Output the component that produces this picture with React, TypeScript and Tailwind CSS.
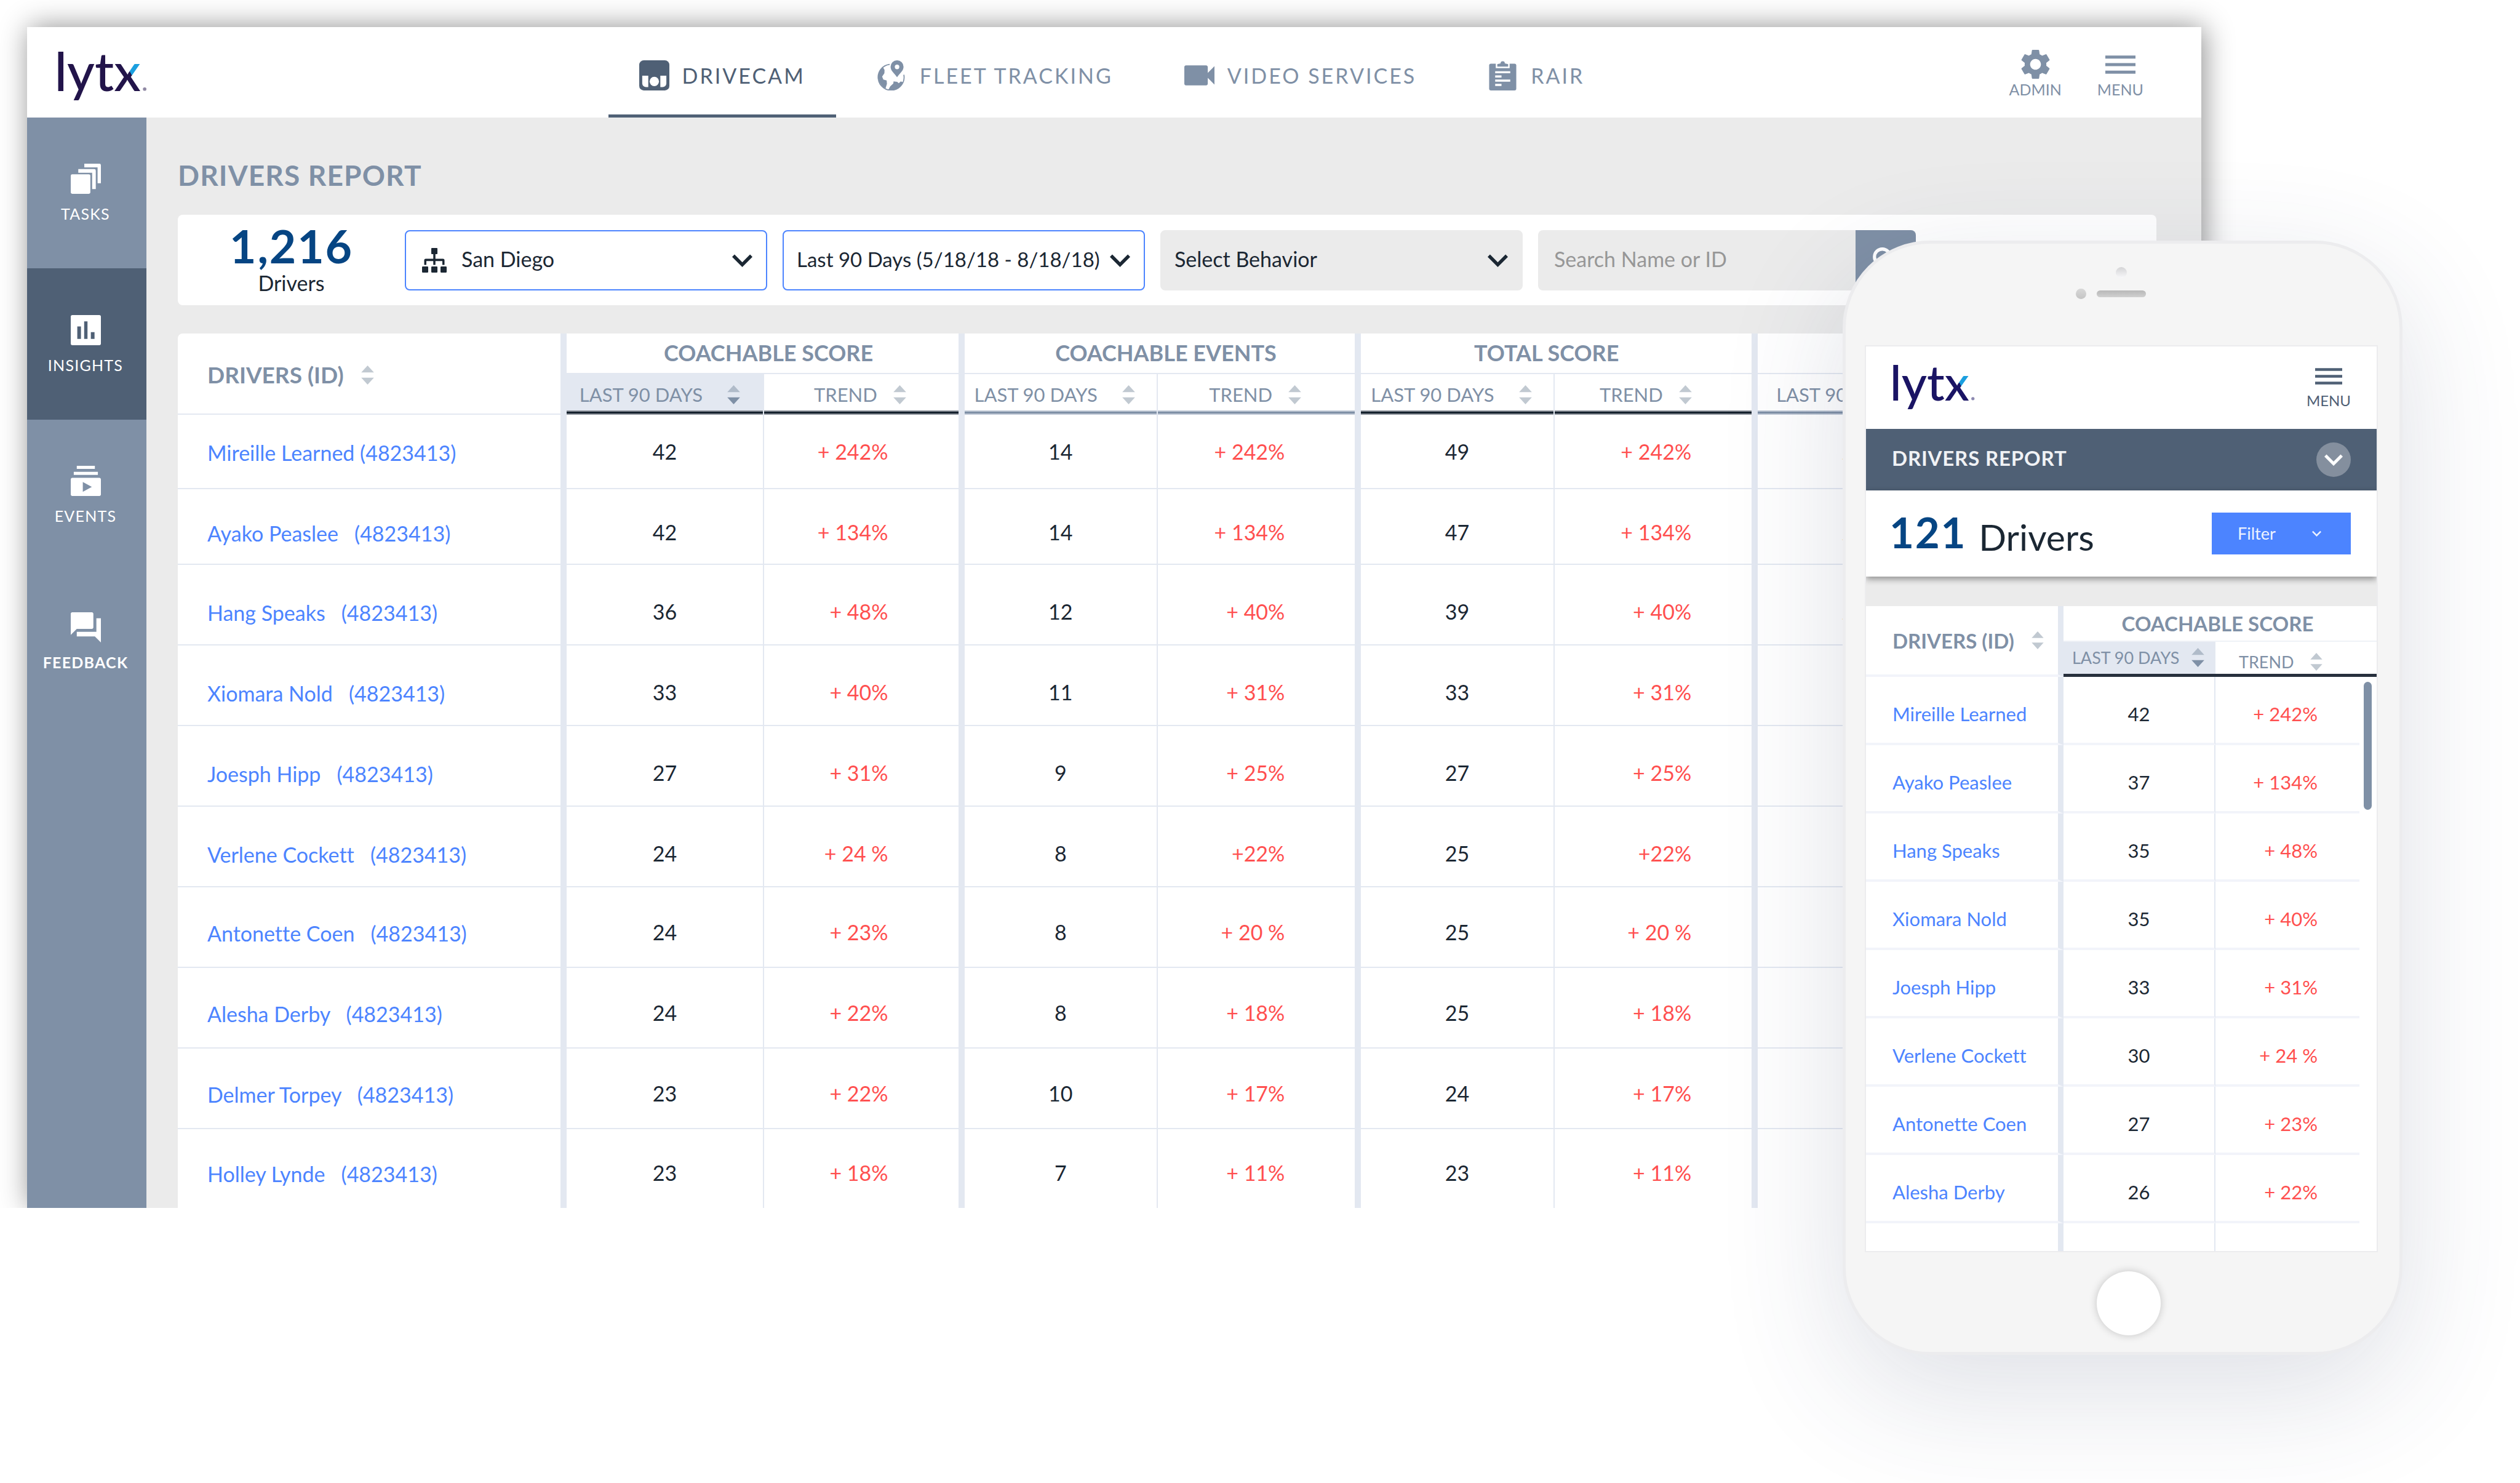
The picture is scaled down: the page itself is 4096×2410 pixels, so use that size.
import React from "react";
import { MdSettings, MdVideocam } from "react-icons/md";

type SvgProps = { className?: string };

/* ---------- Icons ---------- */

function Logo({ id, className, ink }: { id: string; className: string; ink: string }) {
  return (
    <svg viewBox="0 0 182 108" className={"overflow-visible " + className} role="img" aria-label="lytx">
      <defs>
        <linearGradient id={id} gradientUnits="userSpaceOnUse" x1="0" y1="0" x2="100" y2="-60">
          <stop offset="0.875" stopColor={ink} />
          <stop offset="0.875" stopColor="#1b9fdf" />
        </linearGradient>
      </defs>
      <text x="-6" y="81" fontFamily="Lato, sans-serif" fontSize="106" fontWeight="500" fill={`url(#${id})`}>
        lytx
      </text>
      <circle cx="174" cy="77" r="3.5" fill={ink} opacity="0.5" />
    </svg>
  );
}

function Chevron({ className }: SvgProps) {
  return (
    <svg viewBox="6 8 12 8" className={className} fill="currentColor" aria-hidden="true">
      <path d="M16.59 8.59L12 13.17 7.41 8.59 6 10l6 6 6-6z" />
    </svg>
  );
}

function OrgIcon({ className }: SvgProps) {
  return (
    <svg viewBox="0 0 16 16" className={className} fill="currentColor" aria-hidden="true">
      <rect x="6" y="0" width="4" height="4" rx="0.4" />
      <path d="M7.3 4h1.4v3H13.6a1 1 0 0 1 1 1v3h-1.4V8.5H8.7V11H7.3V8.5H2.8V11H1.4V8a1 1 0 0 1 1-1H7.3z" />
      <rect x="0" y="12" width="4" height="4" rx="0.5" />
      <rect x="6" y="12" width="4" height="4" rx="0.5" />
      <rect x="12" y="12" width="4" height="4" rx="0.5" />
    </svg>
  );
}

function SortIcon({ className, active }: { className: string; active?: boolean }) {
  return (
    <svg viewBox="0 0 20 30" className={className} aria-hidden="true">
      <path d="M10 0L20 11H0z" fill={active ? "#b0bbc9" : "#c1c9d1"} />
      <path d="M10 30L0 19H20z" fill={active ? "#7f90a6" : "#c1c9d1"} />
    </svg>
  );
}

function DrivecamIcon({ className }: SvgProps) {
  return (
    <svg viewBox="0 0 20 20" className={className} aria-hidden="true">
      <rect width="20" height="20" rx="3" fill="currentColor" />
      <path d="M2 10.2h4v7.6H4.5A2.5 2.5 0 0 1 2 15.3z" fill="#fff" />
      <path d="M18 10.2h-4v7.6h1.5a2.5 2.5 0 0 0 2.5-2.5z" fill="#fff" />
      <circle cx="10" cy="14" r="3.1" fill="#fff" />
    </svg>
  );
}

function GlobePinIcon({ className }: SvgProps) {
  return (
    <svg viewBox="0 0 20 20" className={className} fill="currentColor" aria-hidden="true">
      <path d="M8.6 2.7A8.6 8.6 0 1 0 18 9.6" fill="none" stroke="currentColor" strokeWidth="0.7" />
      <path d="M4 4.3L5.2 6.4 5.1 8.6 3.6 10.8 4.4 12.8 6.6 13.4 6.8 15.6 5.8 18.8A9 9 0 0 1 4 4.3z" />
      <path d="M7.6 19.8L9 17.2 11 15.4 11.2 14 13.6 14.3 14.6 15.2 16 14 17.4 14.6A9 9 0 0 1 7.6 19.8z" />
      <path
        fillRule="evenodd"
        d="M13.5 0a4.3 4.3 0 0 1 4.3 4.3c0 2.6-2.3 4.2-4.3 6.9-2-2.7-4.3-4.3-4.3-6.9A4.3 4.3 0 0 1 13.5 0zm0 2.9a1.5 1.5 0 1 0 0 3 1.5 1.5 0 0 0 0-3z"
      />
    </svg>
  );
}

function ClipboardIcon({ className }: SvgProps) {
  return (
    <svg viewBox="0 0 20 20" className={className} aria-hidden="true">
      <rect x="1" y="2.2" width="18" height="17.8" rx="1.2" fill="currentColor" />
      <path d="M5.4 2h9.2v3.2H5.4z" fill="#fff" />
      <path d="M6.4 4.2V2.6L8.6 2a1.4 1.4 0 0 1 2.8 0l2.2.6v1.6z" fill="currentColor" />
      <path d="M5 7.2h10v1.4H5zM5 10h4.2v1.4H5zM5 12.8h10v1.4H5zM5 15.6h4.2V17H5z" fill="#fff" />
    </svg>
  );
}

function VideoIcon({ className }: SvgProps) {
  return <MdVideocam viewBox="3 3 18 18" className={className} aria-hidden="true" />;
}

function GearIcon({ className }: SvgProps) {
  return <MdSettings viewBox="2 2 20 20" className={className} aria-hidden="true" />;
}

function BarsIcon({ className }: SvgProps) {
  return (
    <svg viewBox="0 0 20 12" className={className} fill="currentColor" aria-hidden="true">
      <path d="M0 0h20v2H0zM0 5h20v2H0zM0 10h20v2H0z" />
    </svg>
  );
}

function TasksIcon({ className }: SvgProps) {
  return (
    <svg viewBox="0 0 20 20" className={className} fill="currentColor" aria-hidden="true">
      <rect x="0" y="7" width="13" height="13" rx="1" />
      <path d="M5 3.6h10.6a1 1 0 0 1 1 1v12.2h-2.4V6H5z" />
      <path d="M9 0h10a1 1 0 0 1 1 1v12h-2.2V2.4H9z" />
    </svg>
  );
}

function InsightsIcon({ className }: SvgProps) {
  return (
    <svg viewBox="3 3 18 18" className={className} fill="currentColor" aria-hidden="true">
      <path
        fillRule="evenodd"
        d="M4 3h16a1 1 0 0 1 1 1v16a1 1 0 0 1-1 1H4a1 1 0 0 1-1-1V4a1 1 0 0 1 1-1zM6.9 9.8v7.4h2.2V9.8zM11 6.8v10.4h2V6.8zM15 13.2v4h2.2v-4z"
      />
    </svg>
  );
}

function EventsIcon({ className }: SvgProps) {
  return (
    <svg viewBox="2 2 20 20" className={className} fill="currentColor" aria-hidden="true">
      <path d="M20 8H4V6h16v2zm-2-6H6v2h12V2zm4 9v10c0 .55-.45 1-1 1H3c-.55 0-1-.45-1-1V11c0-.55.45-1 1-1h18c.55 0 1 .45 1 1zm-6 5l-6-3.27v6.53L16 16z" />
    </svg>
  );
}

function FeedbackIcon({ className }: SvgProps) {
  return (
    <svg viewBox="2 2 20 20" className={className} fill="currentColor" aria-hidden="true">
      <path d="M21.5 6H19v9H6v3h12l4 4V6zm-4.5 6V3c0-.55-.45-1-1-1H3c-.55 0-1 .45-1 1v14l4-4h10c.55 0 1-.45 1-1z" />
    </svg>
  );
}

/* ---------- Data ---------- */

const tabs = [
  { label: "DRIVECAM", Icon: DrivecamIcon, active: true },
  { label: "FLEET TRACKING", Icon: GlobePinIcon },
  { label: "VIDEO SERVICES", Icon: VideoIcon },
  { label: "RAIR", Icon: ClipboardIcon },
];

const sideItems = [
  { label: "TASKS", Icon: TasksIcon, style: "h-[245px]" },
  { label: "INSIGHTS", Icon: InsightsIcon, style: "h-[246px] bg-[#4f6075]" },
  { label: "EVENTS", Icon: EventsIcon, style: "h-[245px]" },
  { label: "FEEDBACK", Icon: FeedbackIcon, style: "h-[231px] font-bold" },
];

const lineDark =
  "shadow-[inset_0_-2px_0_#8b9099,inset_0_-5px_0_#16222e,inset_0_-7px_0_#8b9099]";
const lineBlue =
  "shadow-[inset_0_-2px_0_#bfc8d5,inset_0_-5px_0_#7f90a6,inset_0_-7px_0_#bfc8d5]";

const groups = [
  { title: "COACHABLE SCORE", titlePad: "pl-5", line: lineDark, lastPad: "pl-[21px]", headPad: "pr-1", trendPad: "pr-[114px]" },
  { title: "COACHABLE EVENTS", titlePad: "pl-5", line: lineBlue, lastPad: "pl-[16px]", headPad: "pr-1", trendPad: "pr-[114px]" },
  { title: "TOTAL SCORE", titlePad: "pr-8", line: lineDark, lastPad: "pl-[16px]", headPad: "pr-6", trendPad: "pr-[98px]" },
  { title: "TOTAL EVENTS", titlePad: "", line: lineBlue, lastPad: "pl-[30px]", headPad: "", trendPad: "pr-[98px]" },
];

const rows = [
  { name: "Mireille Learned (4823413)", cells: ["42", "+ 242%", "14", "+ 242%", "49", "+ 242%", "22", "+ 242%"] },
  { name: "Ayako Peaslee   (4823413)", cells: ["42", "+ 134%", "14", "+ 134%", "47", "+ 134%", "22", "+ 134%"] },
  { name: "Hang Speaks   (4823413)", cells: ["36", "+ 48%", "12", "+ 40%", "39", "+ 40%", "22", "+ 40%"] },
  { name: "Xiomara Nold   (4823413)", cells: ["33", "+ 40%", "11", "+ 31%", "33", "+ 31%", "9", "+ 31%"] },
  { name: "Joesph Hipp   (4823413)", cells: ["27", "+ 31%", "9", "+ 25%", "27", "+ 25%", "9", "+ 25%"] },
  { name: "Verlene Cockett   (4823413)", cells: ["24", "+ 24 %", "8", "+22%", "25", "+22%", "8", "+22%"] },
  { name: "Antonette Coen   (4823413)", cells: ["24", "+ 23%", "8", "+ 20 %", "25", "+ 20 %", "8", "+ 20 %"] },
  { name: "Alesha Derby   (4823413)", cells: ["24", "+ 22%", "8", "+ 18%", "25", "+ 18%", "8", "+ 18%"] },
  { name: "Delmer Torpey   (4823413)", cells: ["23", "+ 22%", "10", "+ 17%", "24", "+ 17%", "8", "+ 17%"] },
  { name: "Holley Lynde   (4823413)", cells: ["23", "+ 18%", "7", "+ 11%", "23", "+ 11%", "7", "+ 11%"] },
];

const phoneRows = [
  ["Mireille Learned", "42", "+ 242%"],
  ["Ayako Peaslee", "37", "+ 134%"],
  ["Hang Speaks", "35", "+ 48%"],
  ["Xiomara Nold", "35", "+ 40%"],
  ["Joesph Hipp", "33", "+ 31%"],
  ["Verlene Cockett", "30", "+ 24 %"],
  ["Antonette Coen", "27", "+ 23%"],
  ["Alesha Derby", "26", "+ 22%"],
];

function rowStyle(i: number) {
  if (i === 0) return { h: "h-[121px]", pt: "pt-[36px]" };
  if (i === 1) return { h: "h-[123px]", pt: "pt-[46px]" };
  if (i < 6) return { h: "h-[131px]", pt: "pt-[52px]" };
  if (i < 9) return { h: "h-[131px]", pt: "pt-[49px]" };
  return { h: "h-[128px]", pt: "pt-[47px]" };
}

/* ---------- Desktop app ---------- */

function Header() {
  return (
    <header className="grid h-[147px] grid-cols-[1fr_auto_1fr] bg-white">
      <div className="flex items-center pt-4 pl-[49px]">
        <Logo id="logo-desk" ink="#22144a" className="h-[88px] w-[149px]" />
      </div>
      <nav className="flex gap-4 pr-2">
        {tabs.map(({ label, Icon, active }) => (
          <a
            key={label}
            href="#"
            className={
              "flex items-center gap-[21px] border-b-[5px] px-[50px] pt-[14px] text-[34px] tracking-[3px] whitespace-nowrap " +
              (active ? "border-[#4f6075] text-[#4f6075]" : "border-transparent text-[#7f90a6]")
            }
          >
            <Icon className="size-[49px]" />
            {label}
          </a>
        ))}
      </nav>
      <div className="flex items-center justify-end gap-[58px] pt-0.5 pr-[94px] text-[25px] leading-6 text-[#7f90a6]">
        <button className="flex flex-col items-center gap-1">
          <GearIcon className="size-[49px]" />
          ADMIN
        </button>
        <button className="flex flex-col items-center gap-1">
          <span className="flex h-[49px] items-center">
            <BarsIcon className="h-[30px] w-[49px]" />
          </span>
          MENU
        </button>
      </div>
    </header>
  );
}

function Sidebar() {
  return (
    <aside className="w-[194px] shrink-0 bg-[#7f90a6] text-[25px] leading-7 tracking-wider text-white">
      {sideItems.map(({ label, Icon, style }) => (
        <a key={label} href="#" className={"flex flex-col items-center justify-center gap-[18px] pr-1 " + style}>
          <Icon className="size-[49px]" />
          {label}
        </a>
      ))}
    </aside>
  );
}

function Picker({ label, option, outlined, icon, size = "text-[34px]" }: { label: string; option: string; outlined?: boolean; icon?: boolean; size?: string }) {
  return (
    <div
      className={
        "flex h-[98px] w-[589px] items-center rounded-lg pr-[22px] text-[#1b2733] " +
        (outlined ? "border-2 border-[#4c84ff] bg-white " : "border-2 border-[#ebebeb] bg-[#ebebeb] ") +
        (icon ? "pl-[26px]" : "pl-[21px]")
      }
    >
      {icon && <OrgIcon className="mr-[24px] size-[40px] shrink-0" />}
      <select aria-label={label} className={"min-w-0 flex-1 appearance-none bg-transparent pb-1 leading-[48px] " + size}>
        <option>{option}</option>
      </select>
      <Chevron className="h-[22px] w-[33px] shrink-0" />
    </div>
  );
}

function FilterBar() {
  return (
    <section className="mt-[34px] flex h-[147px] items-center rounded-lg bg-white">
      <div className="w-[369px] shrink-0 text-center">
        <p className="text-[75px] leading-[74px] font-bold tracking-wide text-[#064583]">1,216</p>
        <p className="text-[34px] leading-[48px] text-[#1b2733]">Drivers</p>
      </div>
      <div className="flex gap-[25px]">
        <Picker label="Group" option="San Diego" outlined icon />
        <Picker label="Date range" option="Last 90 Days (5/18/18 - 8/18/18)" outlined size="text-[33px]" />
        <Picker label="Behavior" option="Select Behavior" />
        <form className="flex h-[98px] w-[614px] overflow-hidden rounded-lg">
          <input
            aria-label="Search Name or ID"
            placeholder="Search Name or ID"
            className="min-w-0 flex-1 bg-[#ebebeb] pb-1 pl-[26px] text-[34px] placeholder:text-[#979797]"
          />
          <button type="button" aria-label="Search" className="flex w-[98px] items-center justify-center bg-[#7f90a6] text-white">
            <svg viewBox="0 0 20 20" className="size-[44px]" fill="none" stroke="currentColor" strokeWidth="2.4" aria-hidden="true">
              <circle cx="7.5" cy="7.5" r="5.8" />
              <path d="M12 12l6.5 6.5" />
            </svg>
          </button>
        </form>
      </div>
    </section>
  );
}

function DriversTable() {
  return (
    <div className="mt-[46px] overflow-hidden rounded-tl-lg bg-white">
      <table className="w-full table-fixed border-separate border-spacing-0 text-[34px] leading-[48px] whitespace-nowrap text-[#1b2733]">
        <colgroup>
          <col className="w-[631px]" />
          <col className="w-[321px]" />
          <col className="w-[325px]" />
          <col className="w-[314px]" />
          <col className="w-[330px]" />
          <col className="w-[314px]" />
          <col className="w-[330px]" />
          <col className="w-[314px]" />
          <col className="w-[333px]" />
        </colgroup>
        <thead className="text-[#7f90a6]">
          <tr className="h-[66px]">
            <th rowSpan={2} className="border-r-[10px] border-b-2 border-[#e3e8f1] p-0 pt-1 pl-[48px]">
              <button className="flex items-center gap-[28px] text-[37px] font-bold">
                DRIVERS (ID)
                <SortIcon className="h-[31px] w-[21px]" />
              </button>
            </th>
            {groups.map((g) => (
              <th
                key={g.title}
                colSpan={2}
                className={"border-r-[10px] border-b-2 border-[#e3e8f1] p-0 pb-0.5 text-[36px] font-bold " + g.titlePad}
              >
                {g.title}
              </th>
            ))}
          </tr>
          <tr className="h-[66px] text-[31px]">
            {groups.map((g, i) => (
              <React.Fragment key={g.title}>
                <th className={"border-r-2 border-[#e3e8f1] p-0 font-normal " + (i === 0 ? "bg-[#e3e8f1] " : "") + g.line}>
                  <button className={"flex items-center gap-[40px] " + g.lastPad}>
                    LAST 90 DAYS
                    <SortIcon active={i === 0} className="h-[31px] w-[21px]" />
                  </button>
                </th>
                <th className={"border-r-[10px] border-[#e3e8f1] p-0 font-normal " + g.headPad + " " + g.line}>
                  <button className="mx-auto flex items-center gap-[26px]">
                    TREND
                    <SortIcon className="h-[31px] w-[21px]" />
                  </button>
                </th>
              </React.Fragment>
            ))}
          </tr>
        </thead>
        <tbody>
          {rows.map((r, i) => {
            const { h, pt } = rowStyle(i);
            const line = i === rows.length - 1 ? "" : "border-b-2 ";
            return (
              <tr key={r.name} className={h}>
                <td className={"border-r-[10px] border-[#e3e8f1] pb-0 pl-[48px] align-top " + line + pt}>
                  <a href="#" className="block pt-0.5 whitespace-pre text-[#4c84ff]">{r.name}</a>
                </td>
                {r.cells.map((c, j) =>
                  j % 2 === 0 ? (
                    <td key={j} className={"border-r-2 border-[#e3e8f1] px-0 pb-0 text-center align-top " + line + pt}>
                      {c}
                    </td>
                  ) : (
                    <td
                      key={j}
                      className={
                        "border-r-[10px] border-[#e3e8f1] pb-0 pl-0 text-right align-top text-[#ff4f4f] " +
                        line + pt + " " + groups[(j - 1) / 2].trendPad
                      }
                    >
                      {c}
                    </td>
                  )
                )}
              </tr>
            );
          })}
        </tbody>
      </table>
    </div>
  );
}

/* ---------- Phone ---------- */

function Phone() {
  return (
    <section
      aria-label="Mobile view"
      className="absolute top-[391px] right-[191px] w-[910px] rounded-[142px] border-[5px] border-[#ececee] bg-[#f5f5f5] pr-[35px] pl-[31px] shadow-[0_60px_200px_rgba(50,60,100,0.16)]"
    >
      <div className="flex h-[165px] flex-col items-center pt-[38px]">
        <div className="size-[18px] rounded-full bg-gradient-to-b from-[#d4d4d6] to-[#f8f8fa]" />
        <div className="mt-[17px] grid w-full grid-cols-[1fr_80px_1fr] items-center">
          <div className="mr-[17px] size-[17px] justify-self-end rounded-full bg-gradient-to-b from-[#d8d8d8] to-[#c4c4c4]" />
          <div className="h-[11px] rounded-full bg-gradient-to-b from-[#b8b8b8] to-[#d0d0d0]" />
        </div>
      </div>

      <div className="h-[1474px] overflow-hidden border-2 border-[#ececee] bg-white">
        <header className="flex h-[134px] items-center justify-between pr-[42px] pl-[43px]">
          <Logo id="logo-phone" ink="#1a1464" className="h-[81px] w-[137px]" />
          <button className="flex flex-col items-center gap-[14px] text-[24px] leading-6 text-[#4f6075]">
            <BarsIcon className="h-[27px] w-[44px]" />
            MENU
          </button>
        </header>

        <div className="flex h-[100px] items-center justify-between bg-[#4f6075] pr-[42px] pl-[42px]">
          <h2 className="pb-1 text-[33px] font-bold tracking-wide text-[#f0f2f5]">DRIVERS REPORT</h2>
          <button aria-label="Expand report" className="flex size-[56px] items-center justify-center rounded-full bg-[#848f9e] text-white">
            <Chevron className="h-[20px] w-[30px]" />
          </button>
        </div>

        <div className="relative flex h-[140px] items-center bg-white pr-[42px] pl-[38px] shadow-[0_4px_10px_rgba(0,0,0,0.4)]">
          <p className="flex items-center gap-[20px] pb-1 leading-[68px]">
            <span className="text-[69px] font-bold tracking-wide text-[#064583]">121</span>
            <span className="pt-4 text-[59px] text-[#1b2733]">Drivers</span>
          </p>
          <button className="ml-auto flex h-[68px] w-[226px] items-center justify-between bg-[#4c84ff] pr-[48px] pl-[42px] text-[27px] text-[#edf2ff]">
            Filter
            <Chevron className="h-[10px] w-[15px]" />
          </button>
        </div>

        <div className="h-[48px] bg-[#ebebeb]" />

        <table className="w-full table-fixed border-separate border-spacing-0 text-[31px] leading-[44px] whitespace-nowrap text-[#1b2733]">
          <colgroup>
            <col className="w-[321px]" />
            <col className="w-[247px]" />
            <col className="w-[234px]" />
            <col className="w-[28px]" />
          </colgroup>
          <thead className="text-[#7f90a6]">
            <tr className="h-[58px]">
              <th rowSpan={2} className="border-r-[9px] border-b-4 border-r-[#e3e8f1] border-b-[#f2f4fa] p-0 pl-[43px]">
                <button className="flex items-center gap-[28px] text-[33px] font-bold">
                  DRIVERS (ID)
                  <SortIcon className="h-[29px] w-[20px]" />
                </button>
              </th>
              <th colSpan={3} className="border-b-2 border-[#eff2f7] p-0 pr-2 text-[33px] font-bold">
                COACHABLE SCORE
              </th>
            </tr>
            <tr className="h-[57px] text-[27px]">
              <th className="bg-[#e3e8f1] p-0 font-normal shadow-[inset_0_-5px_0_#27303d]">
                <button className="mb-[6px] ml-[14px] flex items-center gap-[20px]">
                  LAST 90 DAYS
                  <SortIcon active className="h-[31px] w-[21px]" />
                </button>
              </th>
              <th colSpan={2} className="p-0 font-normal shadow-[inset_0_-5px_0_#27303d]">
                <button className="mt-2 ml-[38px] flex items-center gap-[26px]">
                  TREND
                  <SortIcon className="h-[29px] w-[20px]" />
                </button>
              </th>
            </tr>
          </thead>
          <tbody>
            {phoneRows.map(([name, score, trend], i) => (
              <tr key={name} className="h-[111px]">
                <td className="border-r-[9px] border-b-4 border-r-[#e3e8f1] border-b-[#f2f4fa] p-0 pt-3 pl-[43px]">
                  <a href="#" className="text-[#4c84ff]">{name}</a>
                </td>
                <td className="border-r-2 border-b-4 border-r-[#e3e8f1] border-b-[#f2f4fa] p-0 pt-3 text-center">{score}</td>
                <td className="border-b-4 border-[#f2f4fa] p-0 pt-3 pr-[68px] text-right text-[#ff4f4f]">{trend}</td>
                {i === 0 && (
                  <td rowSpan={9} className="p-0 pt-2 align-top">
                    <div className="ml-[7px] h-[208px] w-[13px] rounded-full bg-[#7f90a6]" />
                  </td>
                )}
              </tr>
            ))}
            <tr className="h-[60px]">
              <td className="border-r-[9px] border-[#e3e8f1] p-0" />
              <td className="border-r-2 border-[#e3e8f1] p-0" />
              <td className="p-0" />
            </tr>
          </tbody>
        </table>
      </div>

      <div className="flex h-[162px] justify-center pt-[31px] pl-6">
        <button aria-label="Home" className="size-[104px] rounded-full bg-white shadow-[0_0_14px_rgba(0,0,0,0.2)]" />
      </div>
    </section>
  );
}

export default function App() {
  return (
    <div className="relative min-h-screen overflow-hidden bg-white font-[Lato,sans-serif] [font-variant-ligatures:none]">
      <div className="overflow-hidden pt-[44px] pr-[518px] pl-[44px]">
        <div className="shadow-[4px_0_44px_rgba(0,0,0,0.45)]">
          <Header />
          <div className="flex bg-[#ebebeb]">
            <Sidebar />
            <main className="min-w-0 flex-1 pt-[64px] pr-[73px] pl-[51px]">
              <h1 className="text-[46px] leading-[60px] font-bold tracking-wide text-[#7f90a6]">DRIVERS REPORT</h1>
              <FilterBar />
              <DriversTable />
            </main>
          </div>
        </div>
      </div>
      <Phone />
    </div>
  );
}
